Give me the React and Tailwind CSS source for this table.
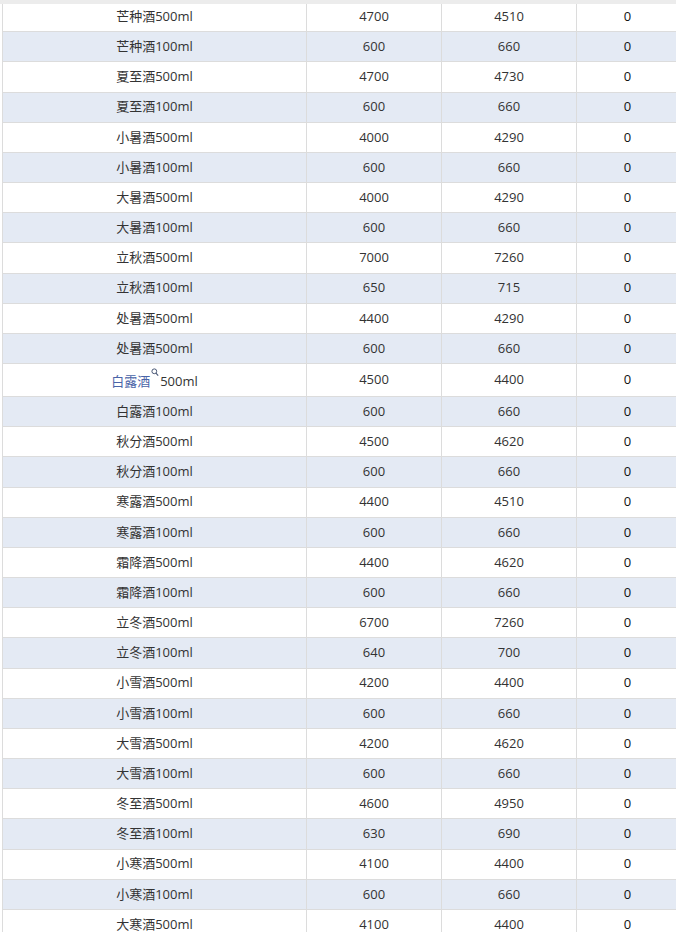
import React from "react";

const rows = [
  ["芒种酒500ml", "4700", "4510", "0"],
  ["芒种酒100ml", "600", "660", "0"],
  ["夏至酒500ml", "4700", "4730", "0"],
  ["夏至酒100ml", "600", "660", "0"],
  ["小暑酒500ml", "4000", "4290", "0"],
  ["小暑酒100ml", "600", "660", "0"],
  ["大暑酒500ml", "4000", "4290", "0"],
  ["大暑酒100ml", "600", "660", "0"],
  ["立秋酒500ml", "7000", "7260", "0"],
  ["立秋酒100ml", "650", "715", "0"],
  ["处暑酒500ml", "4400", "4290", "0"],
  ["处暑酒500ml", "600", "660", "0"],
  ["白露酒500ml", "4500", "4400", "0", true],
  ["白露酒100ml", "600", "660", "0"],
  ["秋分酒500ml", "4500", "4620", "0"],
  ["秋分酒100ml", "600", "660", "0"],
  ["寒露酒500ml", "4400", "4510", "0"],
  ["寒露酒100ml", "600", "660", "0"],
  ["霜降酒500ml", "4400", "4620", "0"],
  ["霜降酒100ml", "600", "660", "0"],
  ["立冬酒500ml", "6700", "7260", "0"],
  ["立冬酒100ml", "640", "700", "0"],
  ["小雪酒500ml", "4200", "4400", "0"],
  ["小雪酒100ml", "600", "660", "0"],
  ["大雪酒500ml", "4200", "4620", "0"],
  ["大雪酒100ml", "600", "660", "0"],
  ["冬至酒500ml", "4600", "4950", "0"],
  ["冬至酒100ml", "630", "690", "0"],
  ["小寒酒500ml", "4100", "4400", "0"],
  ["小寒酒100ml", "600", "660", "0"],
  ["大寒酒500ml", "4100", "4400", "0"],
];

function SearchIcon() {
  return (
    <svg width="8" height="9" viewBox="0 0 8 9" className="block">
      <circle cx="3.3" cy="3.3" r="2.4" fill="none" stroke="#4b5a78" strokeWidth="1" />
      <line x1="5" y1="5.2" x2="7.2" y2="7.6" stroke="#4b5a78" strokeWidth="1.1" />
    </svg>
  );
}

function NameCell({ name, linked }) {
  if (!linked) return <span>{name}</span>;
  const head = name.slice(0, 3);
  const tail = name.slice(3);
  return (
    <span className="inline-flex items-start pt-[4px]">
      <span className="text-[#4a64a8]">{head}</span>
      <span className="relative w-[10px] h-[14px]">
        <span className="absolute left-[1px] -top-[4px]"><SearchIcon /></span>
      </span>
      <span>{tail}</span>
    </span>
  );
}

export default function App() {
  return (
    <div
      className="w-[676px] h-[932px] overflow-hidden bg-white text-[13px] text-[#333]"
      style={{ fontFamily: '"Open Sans", "Noto Sans CJK SC", sans-serif' }}
    >
      <div className="h-[4px] bg-[#ececec]" />
      <div className="overflow-hidden pl-[2px]">
        <div className="-mt-[2px] w-[676px]">
          {rows.map((r, i) => (
            <div
              key={i}
              className={`grid grid-cols-[304px_135px_135px_102px] border-b border-[#dcdcdc] ${
                r[4] ? "h-[33px]" : "h-[30.18px]"
              } ${i % 2 === 1 ? "bg-[#e4eaf4]" : "bg-white"}`}
            >
              <div className="flex items-center justify-center border-l border-[#dcdcdc]">
                <NameCell name={r[0]} linked={r[4]} />
              </div>
              <div className="flex items-center justify-center border-l border-[#dcdcdc]">{r[1]}</div>
              <div className="flex items-center justify-center border-l border-[#dcdcdc]">{r[2]}</div>
              <div className="flex items-center justify-center border-l border-[#dcdcdc] text-[#111]">{r[3]}</div>
            </div>
          ))}
        </div>
      </div>
    </div>
  );
}
